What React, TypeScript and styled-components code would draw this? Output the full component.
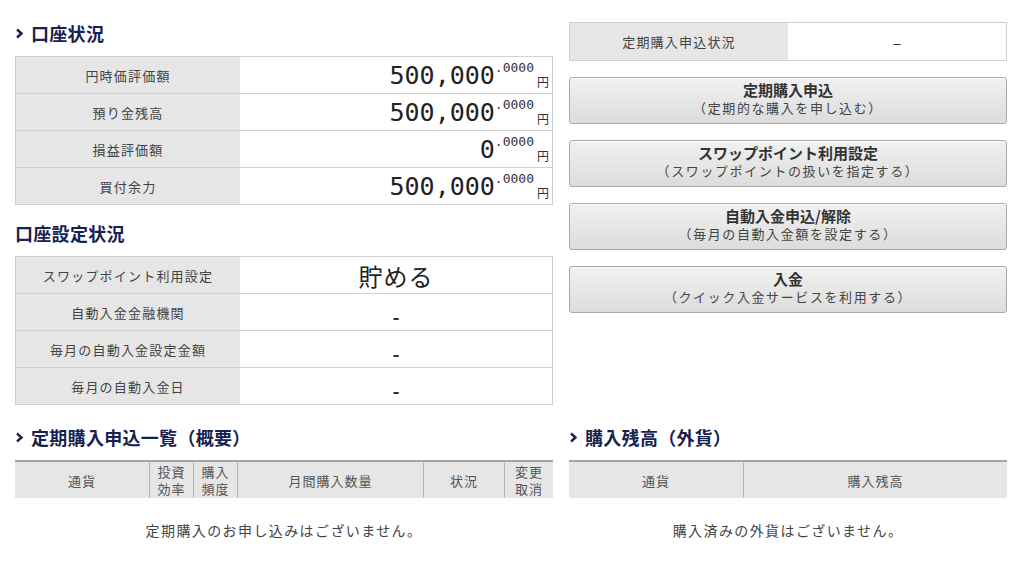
import styled, { createGlobalStyle } from "styled-components";
import { Fragment } from "react";

const GlobalStyle = createGlobalStyle`
  body {
    margin: 0;
    background: #ffffff;
    font-family: "Noto Sans CJK JP", "Noto Sans", sans-serif;
    color: #333;
  }
`;

const Page = styled.div`
  display: grid;
  grid-template-columns: 538px 438px;
  column-gap: 16px;
  row-gap: 20px;
  padding: 21px 15px 0 15px;
  width: 992px;
`;

const Column = styled.div`
  display: flex;
  flex-direction: column;
`;

const Heading = styled.h2<{ $spaced?: boolean }>`
  box-sizing: border-box;
  display: flex;
  align-items: center;
  gap: 7px;
  margin: ${(p) => (p.$spaced ? "16px" : "0")} 0 6px 0;
  height: 29px;
  padding-bottom: 5px;
  font-size: 18px;
  font-weight: 700;
  color: #16224f;
  letter-spacing: 0.3px;
`;

const Chevron = () => (
  <svg width="9" height="11" viewBox="0 0 9 11">
    <path d="M2 1.5 L6.5 5.5 L2 9.5" fill="none" stroke="#16224f" strokeWidth="2.4" />
  </svg>
);

const InfoTable = styled.div<{ $label: number; $offset?: number }>`
  display: grid;
  grid-template-columns: ${(p) => p.$label}px 1fr;
  margin-top: ${(p) => p.$offset ?? 0}px;
  border-top: 1px solid #cfcfcf;
  border-left: 1px solid #cfcfcf;
`;

const Label = styled.div<{ $h?: number }>`
  box-sizing: border-box;
  height: ${(p) => p.$h ?? 37}px;
  display: flex;
  align-items: center;
  justify-content: center;
  background: #e6e6e6;
  border-bottom: 1px solid #cfcfcf;
  font-size: 13px;
  letter-spacing: 1.2px;
  color: #444;
`;

const Value = styled.div<{ $align?: string; $h?: number }>`
  box-sizing: border-box;
  height: ${(p) => p.$h ?? 37}px;
  display: flex;
  align-items: center;
  justify-content: ${(p) => p.$align ?? "center"};
  padding-right: ${(p) => (p.$align === "flex-end" ? "3px" : "0")};
  background: #fff;
  border-right: 1px solid #cfcfcf;
  border-bottom: 1px solid #cfcfcf;
  color: #222;
`;

const Amount = styled.span`
  display: inline-flex;
  align-items: flex-end;
  line-height: 1;
`;

const Big = styled.span`
  font-family: "DejaVu Sans Mono", "Liberation Mono", monospace;
  font-size: 25px;
  color: #222;
`;

const Frac = styled.span`
  font-family: "DejaVu Sans Mono", "Liberation Mono", monospace;
  font-size: 13px;
  align-self: flex-start;
  margin-top: -2px;
  color: #333;
`;

const Yen = styled.span`
  font-size: 12px;
  margin-left: 3px;
  color: #333;
`;

const Word = styled.span`
  font-size: 24px;
  letter-spacing: 1px;
  color: #222;
`;

const Dash = styled.span`
  font-size: 19px;
  font-weight: 700;
  color: #333;
  margin-top: 6px;
`;

const EnDash = styled.span`
  font-size: 16px;
  color: #333;
`;

const ActionButton = styled.button`
  box-sizing: border-box;
  height: 47px;
  width: 100%;
  margin-top: 16px;
  display: flex;
  flex-direction: column;
  align-items: center;
  justify-content: center;
  border: 1px solid #a9a9a9;
  border-radius: 3px;
  background: linear-gradient(#f1f1f1, #dcdcdc);
  box-shadow: inset 0 1px 0 #fafafa;
  font-family: inherit;
  padding: 0 0 5px 0;
  cursor: pointer;
`;

const ButtonTitle = styled.span`
  font-size: 15px;
  font-weight: 700;
  color: #333;
  line-height: 19px;
`;

const ButtonSub = styled.span`
  font-size: 13px;
  letter-spacing: 1.6px;
  color: #444;
  line-height: 18px;
`;

const ListTable = styled.div<{ $cols: string }>`
  display: grid;
  grid-template-columns: ${(p) => p.$cols};
  border-top: 2px solid #a6a6a6;
  background: #e6e6e6;
`;

const HeadCell = styled.div<{ $last?: boolean }>`
  height: 36px;
  display: flex;
  align-items: center;
  justify-content: center;
  text-align: center;
  border-right: ${(p) => (p.$last ? "none" : "1px solid #b5b5b5")};
  font-size: 13px;
  letter-spacing: 1px;
  line-height: 17px;
  color: #555;
`;

const Empty = styled.div`
  height: 64px;
  display: flex;
  align-items: center;
  justify-content: center;
  font-size: 14px;
  letter-spacing: 1.4px;
  color: #444;
`;

const accounts = [
  { label: "円時価評価額", amount: "500,000" },
  { label: "預り金残高", amount: "500,000" },
  { label: "損益評価額", amount: "0" },
  { label: "買付余力", amount: "500,000" },
];

const settings = [
  { label: "スワップポイント利用設定", value: "貯める" },
  { label: "自動入金金融機関", value: "-" },
  { label: "毎月の自動入金設定金額", value: "-" },
  { label: "毎月の自動入金日", value: "-" },
];

const buttons = [
  { title: "定期購入申込", sub: "（定期的な購入を申し込む）" },
  { title: "スワップポイント利用設定", sub: "（スワップポイントの扱いを指定する）" },
  { title: "自動入金申込/解除", sub: "（毎月の自動入金額を設定する）" },
  { title: "入金", sub: "（クイック入金サービスを利用する）" },
];

export default function App() {
  return (
    <>
      <GlobalStyle />
      <Page>
        <Column>
          <Heading>
            <Chevron />
            口座状況
          </Heading>
          <InfoTable $label={224}>
            {accounts.map((a) => (
              <Fragment key={a.label}>
                <Label>{a.label}</Label>
                <Value $align="flex-end">
                  <Amount>
                    <Big>{a.amount}</Big>
                    <Frac>.0000</Frac>
                    <Yen>円</Yen>
                  </Amount>
                </Value>
              </Fragment>
            ))}
          </InfoTable>

          <Heading $spaced>口座設定状況</Heading>
          <InfoTable $label={224}>
            {settings.map((s) => (
              <Fragment key={s.label}>
                <Label>{s.label}</Label>
                <Value>{s.value === "-" ? <Dash>-</Dash> : <Word>{s.value}</Word>}</Value>
              </Fragment>
            ))}
          </InfoTable>
        </Column>

        <Column>
          <InfoTable $label={218} $offset={1}>
            <Label $h={38}>定期購入申込状況</Label>
            <Value $h={38}>
              <EnDash>–</EnDash>
            </Value>
          </InfoTable>
          {buttons.map((b) => (
            <ActionButton key={b.title}>
              <ButtonTitle>{b.title}</ButtonTitle>
              <ButtonSub>{b.sub}</ButtonSub>
            </ActionButton>
          ))}
        </Column>

        <Column>
          <Heading>
            <Chevron />
            定期購入申込一覧（概要）
          </Heading>
          <ListTable $cols="135px 44px 44px 186px 81px 48px">
            <HeadCell>通貨</HeadCell>
            <HeadCell>
              投資
              <br />
              効率
            </HeadCell>
            <HeadCell>
              購入
              <br />
              頻度
            </HeadCell>
            <HeadCell>月間購入数量</HeadCell>
            <HeadCell>状況</HeadCell>
            <HeadCell $last>
              変更
              <br />
              取消
            </HeadCell>
          </ListTable>
          <Empty>定期購入のお申し込みはございません。</Empty>
        </Column>

        <Column>
          <Heading>
            <Chevron />
            購入残高（外貨）
          </Heading>
          <ListTable $cols="175px 263px">
            <HeadCell>通貨</HeadCell>
            <HeadCell $last>購入残高</HeadCell>
          </ListTable>
          <Empty>購入済みの外貨はございません。</Empty>
        </Column>
      </Page>
    </>
  );
}
